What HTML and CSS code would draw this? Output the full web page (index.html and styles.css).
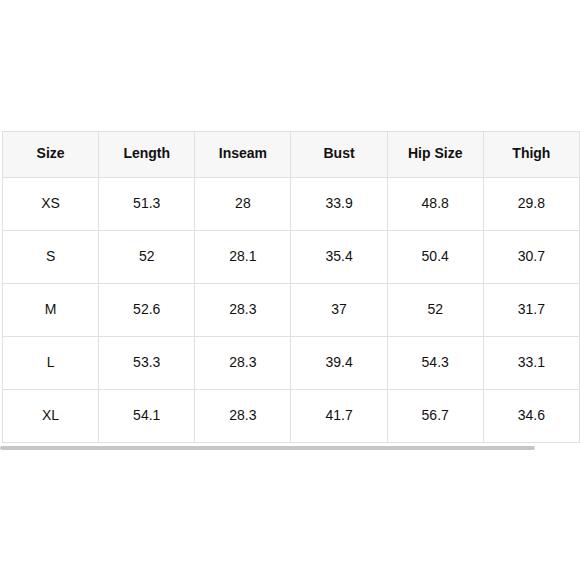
FILE: index.html
```html
<!DOCTYPE html>
<html>
<head>
<meta charset="utf-8">
<link rel="stylesheet" href="styles.css">
</head>
<body>
<div class="page">
  <div class="scroller">
    <table class="sizes">
      <thead>
        <tr><th>Size</th><th>Length</th><th>Inseam</th><th>Bust</th><th>Hip Size</th><th>Thigh</th></tr>
      </thead>
      <tbody>
        <tr><td>XS</td><td>51.3</td><td>28</td><td>33.9</td><td>48.8</td><td>29.8</td></tr>
        <tr><td>S</td><td>52</td><td>28.1</td><td>35.4</td><td>50.4</td><td>30.7</td></tr>
        <tr><td>M</td><td>52.6</td><td>28.3</td><td>37</td><td>52</td><td>31.7</td></tr>
        <tr><td>L</td><td>53.3</td><td>28.3</td><td>39.4</td><td>54.3</td><td>33.1</td></tr>
        <tr><td>XL</td><td>54.1</td><td>28.3</td><td>41.7</td><td>56.7</td><td>34.6</td></tr>
      </tbody>
    </table>
    <div class="scrollbar"><div class="thumb"></div></div>
  </div>
</div>
</body>
</html>
```

FILE: styles.css
```css
html, body {
  margin: 0;
  padding: 0;
  background: #ffffff;
}
.page {
  width: 580px;
  height: 580px;
  padding-top: 131px;
  box-sizing: border-box;
  font-family: "Liberation Sans", Arial, sans-serif;
  color: #111;
}
.scroller {
  width: 580px;
}
.sizes {
  border-collapse: collapse;
  margin-left: 2px;
  table-layout: fixed;
  width: 578px;
}
.sizes th,
.sizes td {
  border: 1px solid #e0e0e0;
  text-align: center;
  vertical-align: middle;
  font-size: 14px;
  padding: 0 0 3px 0;
}
.sizes th {
  background: #f7f7f7;
  font-weight: bold;
  height: 42px;
}
.sizes td {
  height: 49px;
}
.scrollbar {
  margin-top: 3px;
  height: 4px;
  width: 580px;
}
.thumb {
  width: 535px;
  height: 4px;
  background: #c6c6c6;
  border-radius: 2px;
}
```
